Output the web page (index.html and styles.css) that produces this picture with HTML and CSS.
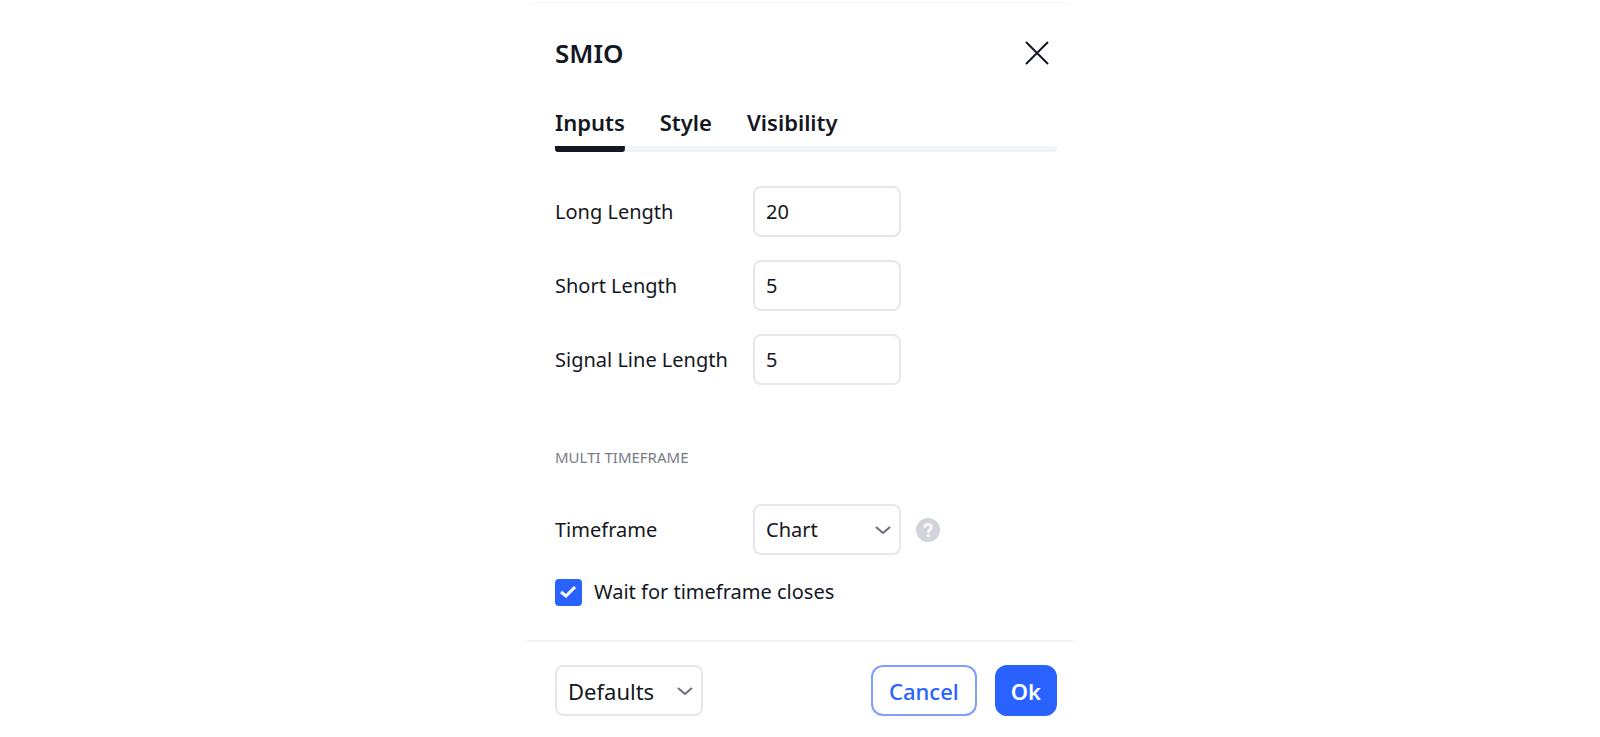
FILE: index.html
```html
<!DOCTYPE html>
<html lang="en">
<head>
    <meta charset="UTF-8">
    <meta name="viewport" content="width=device-width, initial-scale=1.0">
    <title>SMIO</title>
    <link rel="stylesheet" href="styles.css">
</head>
<body>

    <form class="dialog">
        <header class="header">
            <h1>SMIO</h1>
            <button type="button" class="close" aria-label="Close">
                <svg width="24" height="24" viewBox="0 0 24 24" fill="none" stroke="#131722" stroke-width="2">
                    <path d="M1 1l22 22M23 1L1 23"/>
                </svg>
            </button>
        </header>

        <nav class="tabs">
            <button type="button" class="tab active">Inputs</button>
            <button type="button" class="tab">Style</button>
            <button type="button" class="tab">Visibility</button>
        </nav>

        <div class="content">
            <div class="row">
                <label for="long">Long Length</label>
                <input type="text" id="long" class="field" value="20">
            </div>
            <div class="row">
                <label for="short">Short Length</label>
                <input type="text" id="short" class="field" value="5">
            </div>
            <div class="row">
                <label for="signal">Signal Line Length</label>
                <input type="text" id="signal" class="field" value="5">
            </div>

            <h2>MULTI TIMEFRAME</h2>

            <div class="row">
                <label for="timeframe">Timeframe</label>
                <div class="select">
                    <select id="timeframe" class="field">
                        <option>Chart</option>
                    </select>
                    <svg class="arrow" width="16" height="10" viewBox="0 0 16 10" fill="none" stroke="#6a6d78" stroke-width="2">
                        <path d="M1 1l7 6 7-6"/>
                    </svg>
                </div>
                <button type="button" class="help" aria-label="Help">
                    <svg width="24" height="24" viewBox="0 0 24 24" fill="none">
                        <circle cx="12" cy="12" r="12" fill="#d1d4dc"/>
                        <path d="M8.6 9.6c0-2 1.4-3.2 3.4-3.2s3.4 1.2 3.4 3c0 2.4-3.2 2.4-3.2 5" stroke="#fff" stroke-width="2.4"/>
                        <circle cx="12.2" cy="17.4" r="1.5" fill="#fff"/>
                    </svg>
                </button>
            </div>

            <div class="check">
                <input type="checkbox" id="wait" checked>
                <label for="wait">Wait for timeframe closes</label>
            </div>
        </div>

        <footer class="footer">
            <div class="select">
                <select class="field defaults" aria-label="Defaults">
                    <option>Defaults</option>
                </select>
                <svg class="arrow" width="16" height="10" viewBox="0 0 16 10" fill="none" stroke="#6a6d78" stroke-width="2">
                    <path d="M1 1l7 6 7-6"/>
                </svg>
            </div>
            <div class="actions">
                <button type="button" class="btn">Cancel</button>
                <button type="submit" class="btn primary">Ok</button>
            </div>
        </footer>
    </form>

</body>
</html>
```

FILE: styles.css
```css
* {
    box-sizing: border-box;
}
body {
    margin: 0;
    background-color: #fff;
    color: #131722;
    font-family: "Trebuchet MS", "Noto Sans", sans-serif;
    font-size: 20px;
    line-height: 28px;
}
button, input, select {
    font: inherit;
    color: inherit;
}
button {
    padding: 0;
    border: none;
    background: none;
    cursor: pointer;
}
svg {
    display: block;
}
.dialog {
    max-width: 546px;
    margin: 2px auto 0;
    border-top: 1px solid #f5f5f7;
    border-radius: 8px;
}
.header {
    display: flex;
    justify-content: space-between;
    align-items: center;
    padding: 32px 24px 0 28px;
}
h1 {
    margin: 0;
    font-size: 26px;
    font-weight: 600;
    line-height: 36px;
}
.tabs {
    display: flex;
    gap: 35px;
    margin: 33px 16px 0 28px;
    border-radius: 3px;
    background: linear-gradient(#f0f3fa, #f0f3fa) bottom / 100% 6px no-repeat;
}
.tab {
    padding: 4px 0 16px;
    font-size: 22px;
    font-weight: 600;
}
.tab.active {
    background: linear-gradient(#131722, #131722) bottom / 100% 6px no-repeat;
    border-radius: 3px;
}
.content {
    display: flex;
    flex-direction: column;
    gap: 23px;
    padding: 34px 28px;
}
.row {
    display: flex;
    align-items: center;
}
.row label {
    width: 198px;
}
.field {
    display: block;
    width: 148px;
    height: 51px;
    padding: 0 11px;
    border: 2px solid #e6e6ec;
    border-radius: 8px;
    background-color: #fff;
    appearance: none;
    outline: none;
}
.select {
    position: relative;
}
.arrow {
    position: absolute;
    right: 10px;
    top: 22px;
    pointer-events: none;
}
.help {
    margin-left: 15px;
}
h2 {
    margin: 35px 0 10px;
    color: #787b86;
    font-size: 15px;
    font-weight: 400;
    line-height: 28px;
}
.check {
    display: flex;
    align-items: center;
    gap: 12px;
}
.check input {
    width: 27px;
    height: 27px;
    margin: 0;
    border-radius: 4px;
    appearance: none;
    background: #2962ff url("data:image/svg+xml,%3Csvg xmlns='http://www.w3.org/2000/svg' viewBox='0 0 27 27' fill='none' stroke='white' stroke-width='3'%3E%3Cpath d='M6 13l5 4 9-9'/%3E%3C/svg%3E");
}
.footer {
    display: flex;
    justify-content: space-between;
    padding: 23px 16px 20px 28px;
    border-top: 2px solid #f0f1f5;
}
.defaults {
    font-size: 22px;
}
.actions {
    display: flex;
    gap: 18px;
}
.btn {
    height: 51px;
    padding: 0 16px;
    border: 2px solid #7f9fff;
    border-radius: 12px;
    color: #2962ff;
    font-size: 22px;
    font-weight: 500;
}
.btn.primary {
    padding: 0 14px;
    border-color: #2962ff;
    background-color: #2962ff;
    color: #fff;
    font-weight: 600;
}
```
